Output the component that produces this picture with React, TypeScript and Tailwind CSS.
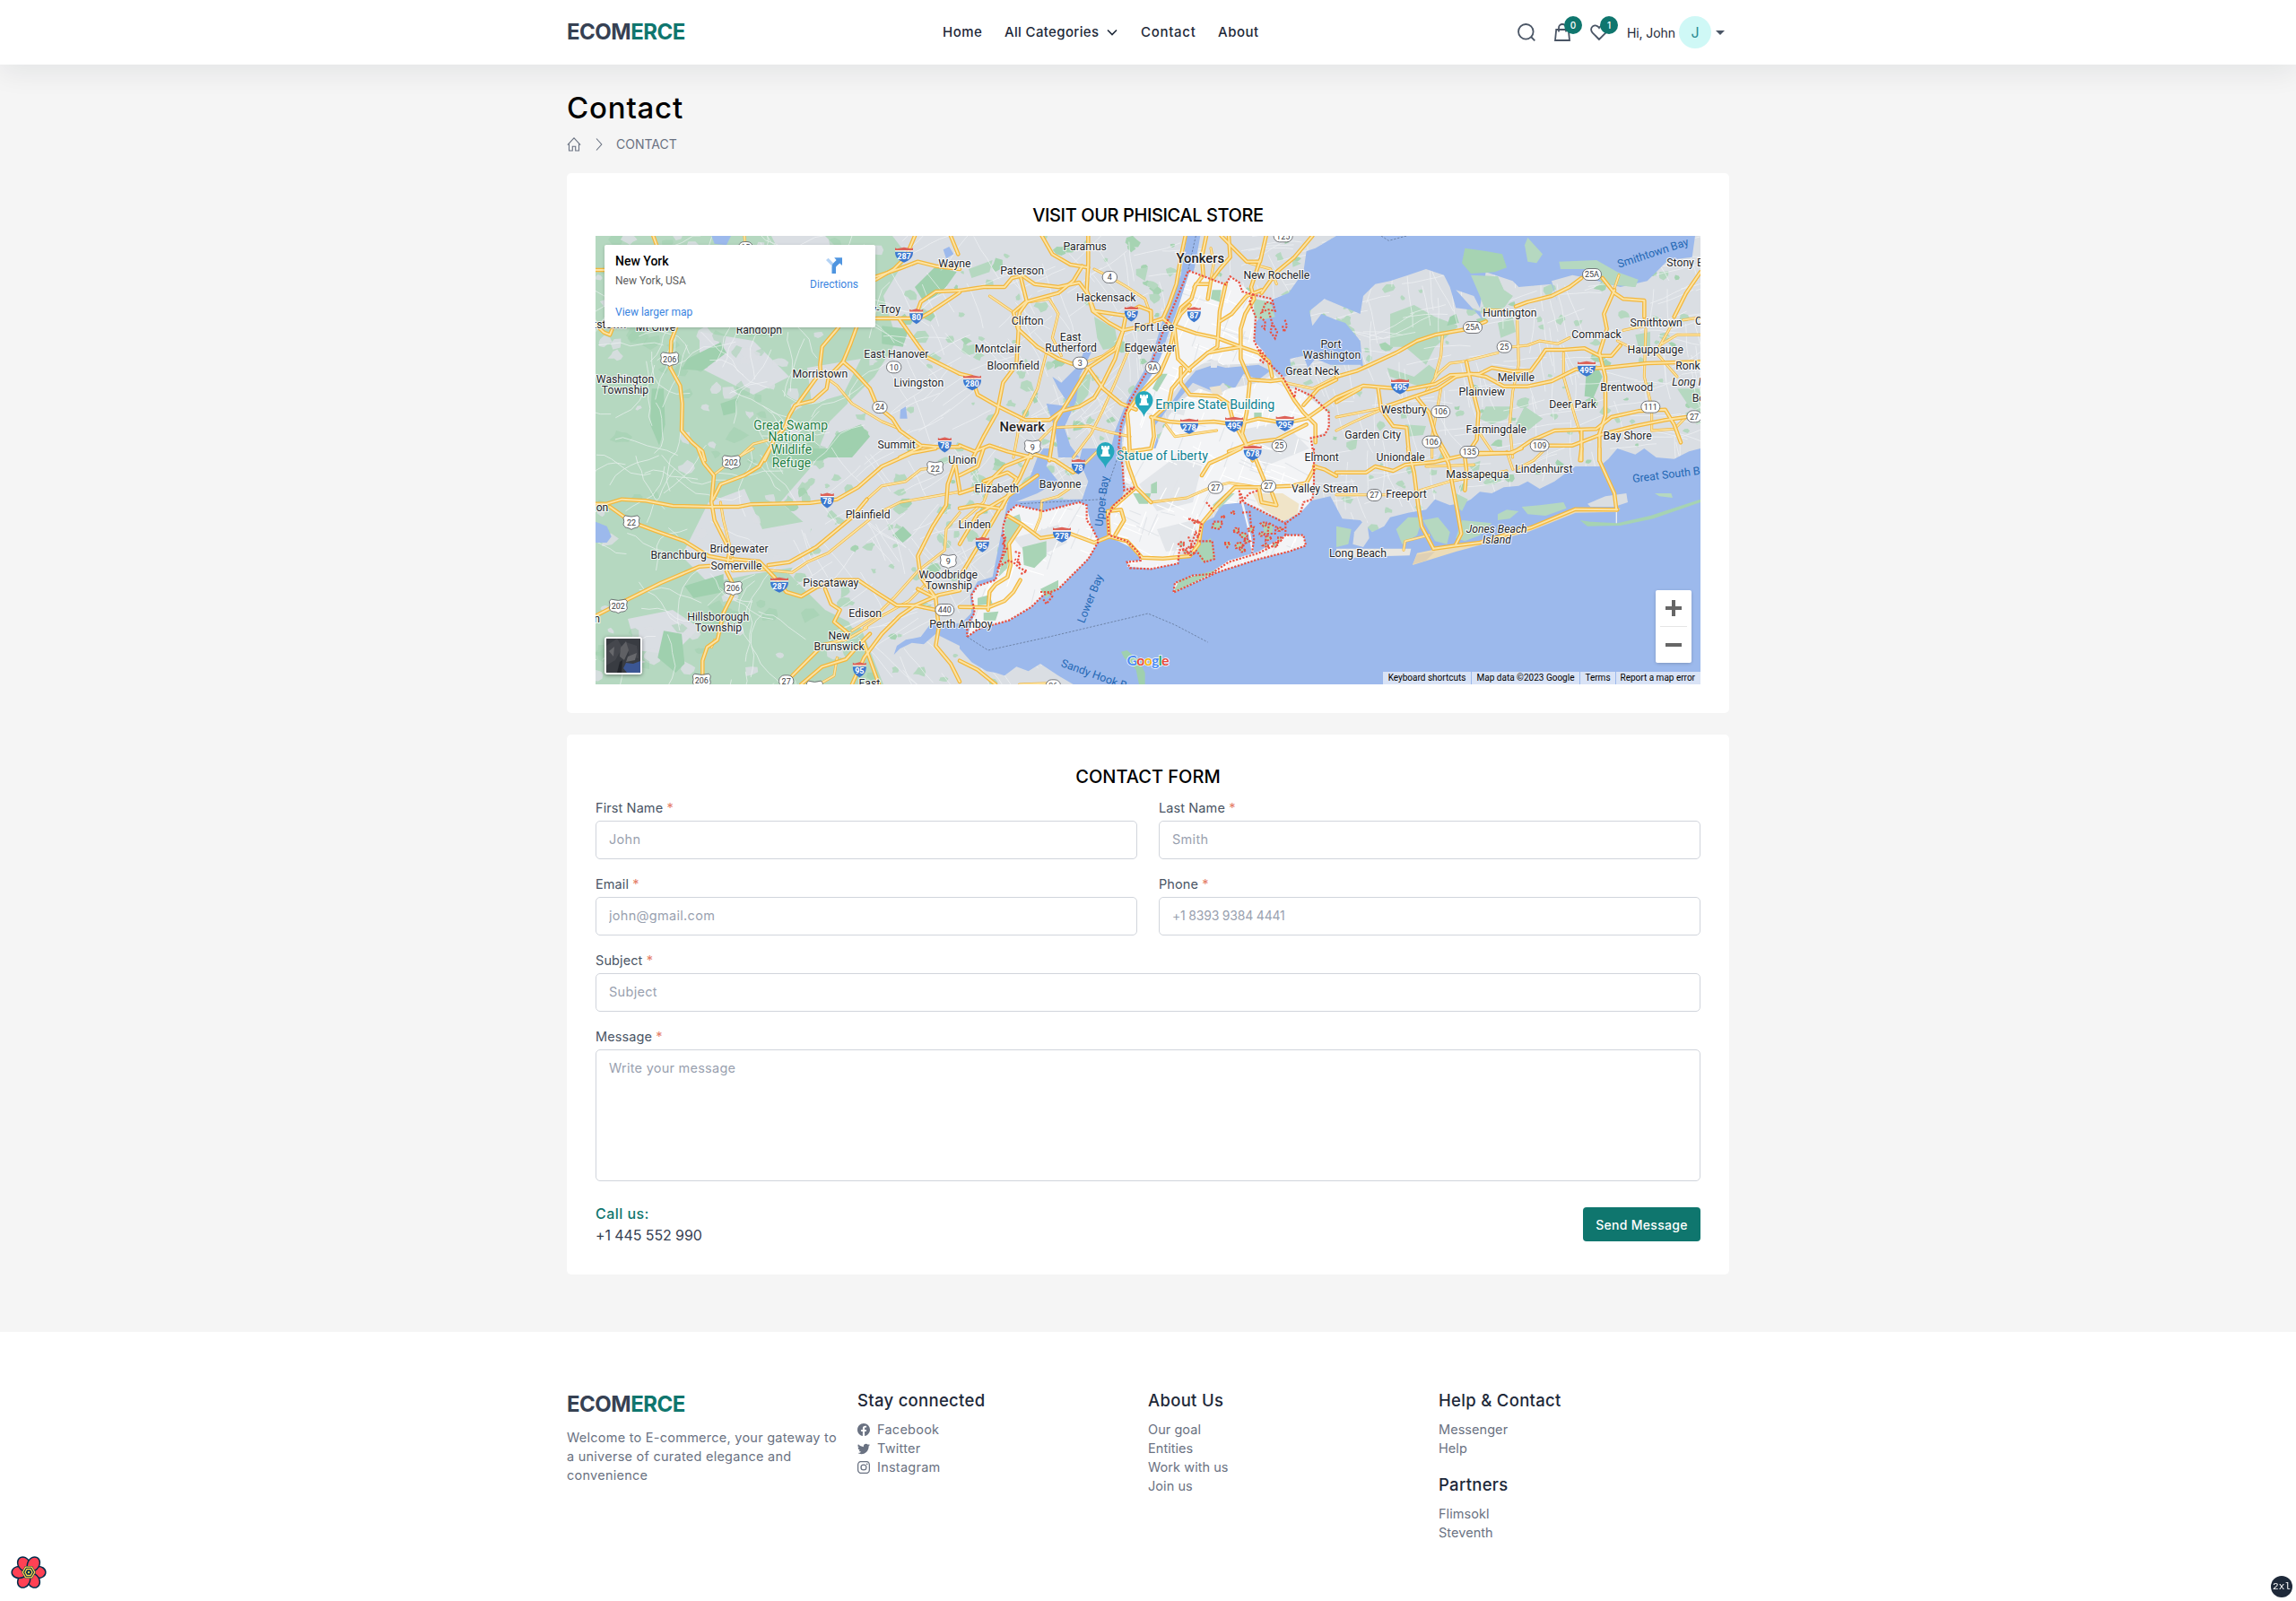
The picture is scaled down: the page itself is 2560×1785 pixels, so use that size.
import React from "react";
import { BsFacebook, BsTwitter, BsInstagram } from "react-icons/bs";

/* ---------- Map data: six 420px wide tiles, drawn at three units per pixel ---------- */

type Tile = "A" | "B" | "C" | "D" | "E" | "F";

const ORIGIN: Record<Tile, [number, number]> = {
  A: [650, 220],
  B: [1070, 220],
  C: [1490, 220],
  D: [650, 500],
  E: [1070, 500],
  F: [1490, 500],
};

const px = (t: Tile, x: number, y: number): [number, number] => [
  ORIGIN[t][0] + x / 3,
  ORIGIN[t][1] + y / 3,
];

const MAJOR: Record<Tile, string[]> = {
  A: [
    "42,243 75,243",
    "235,129 250,170",
    "42,425 70,452 90,460 98,440",
    "312,435 295,480 292,570 325,630 332,690 330,780 365,820 400,850 408,880",
    "915,435 895,490 870,550 822,600 815,640 770,680 710,695 690,730 675,770 640,810 608,880",
    "870,550 905,580 960,640 985,700 1035,740 1060,780 1130,830 1180,835 1260,835",
    "780,605 715,695",
    "980,275 1040,240 1080,200 1110,129",
    "980,265 1060,238 1120,215 1180,230 1260,240",
    "980,405 1110,405 1130,350 1180,315 1260,312",
    "1060,410 1110,480 1150,535 1220,570 1260,590",
    "1120,408 1160,385 1260,318",
    "1060,870 1130,835",
    "1230,129 1255,190",
    "855,435 800,500 793,560 795,600",
  ],
  B: [
    "0,312 80,300 150,300 175,270 210,262 250,290 330,300 400,285 430,325 450,380 550,395",
    "430,129 430,220 425,310 445,380 500,420 545,445 640,425",
    "275,129 310,190 370,225 430,235",
    "410,230 380,280 330,320 220,350 180,385 195,440 260,500 330,540 370,555 430,570 480,640 540,690 590,710",
    "205,270 225,350 200,385 195,480 190,560 145,620 125,720 80,800 40,880",
    "0,590 40,600 60,660 130,700 220,745 300,745 340,715 400,700 450,670 480,620 520,540 545,450 555,400",
    "300,880 320,750 370,670 430,570 520,510 545,450",
    "755,129 740,200 725,290 700,360 680,405 650,415",
    "770,360 740,390 718,430 790,455 860,470 940,500 1000,520 1035,550 1045,600",
    "825,129 810,200 815,260 785,300",
    "900,129 905,200 870,240 840,280 830,340",
    "875,129 960,215 1005,215 1025,129",
    "1005,210 975,300 985,340 955,390 940,440 940,540 970,610",
    "1010,310 960,330 910,390 870,415",
    "1180,129 1120,200 1060,250 1010,320",
    "890,290 870,380 862,500 830,520 760,580 710,640 700,690 645,740 650,800 640,840 570,850",
    "830,290 790,290 775,340 740,370 718,430 730,540 770,580",
    "740,570 740,620 770,660 860,665 900,690 915,750 960,830 980,880",
    "640,735 700,750 760,755 850,750 920,760 1000,740 1090,755 1160,740 1260,670",
    "970,610 1040,615 1080,610 1120,680 1150,720 1190,760 1190,820",
    "1260,610 1200,640 1150,695",
    "830,520 880,510 940,500",
    "680,405 720,440",
    "900,850 980,820 1060,810 1160,760",
    "970,620 960,720 945,790 965,840",
    "0,830 50,850 100,830 160,850 240,870",
    "550,395 600,365 640,380 640,420",
    "570,870 565,770 560,720 600,660 670,590 700,520 718,440",
  ],
  C: [
    "0,670 90,630 150,635 240,642 330,625 380,595 480,590 520,570 590,582 650,580 680,540 700,510 760,510 830,505 880,530 920,530 950,495",
    "0,685 80,640",
    "150,705 250,670 340,640 400,600 450,590 500,600 560,632 640,632 720,615 800,575 900,570 1040,555 1218,550",
    "140,640 150,710 190,765 235,770 245,880",
    "270,670 310,720 330,790 375,870",
    "435,550 450,620 475,720 470,810 430,870",
    "930,310 895,390 905,440 880,520 900,600 900,730 880,790 880,880",
    "480,855 590,855 650,815 730,780 870,775 920,735 1010,715 1100,710 1130,760 1152,820",
    "690,830 790,830 880,795 1000,765 1100,745 1170,735",
    "820,780 820,880",
    "820,270 780,300 720,330 640,350 600,365",
    "890,270 930,320 960,340 1030,345 1030,400",
    "1218,250 1170,320 1130,400",
    "0,600 70,580 200,520 270,480 330,460 440,440 500,415",
  ],
  D: [
    "42,185 80,185 130,170 210,175 300,192 430,195 520,195 560,187 760,182 850,170 920,130 1000,60 1100,15 1180,0",
    "90,195 160,245 240,275 340,310 420,360 500,375",
    "385,0 405,50 438,90 430,180 440,240 490,340 480,410 500,450",
    "625,0 590,60 540,90 460,120 435,170",
    "42,560 120,520 260,450 390,395 430,392",
    "500,370 590,378 640,430 680,480 730,495 780,465 850,440 920,440 980,480 1050,525 1110,525 1180,540 1230,535",
    "620,390 690,380 780,330 900,230 950,170",
    "500,490 470,550 450,640 415,665 400,710 400,760",
    "700,760 790,670",
    "730,789 800,730 880,705 920,660 960,620",
    "900,789 940,700 1000,620 1060,560 1110,525 1190,490 1260,475",
    "1120,470 1180,500 1190,600 1180,660 1230,720 1260,780",
    "1260,140 1245,50 1220,120 1215,190 1170,260 1120,360 1130,430 1180,500",
    "810,470 830,520 860,540 840,580 890,620",
    "940,650 990,789",
  ],
  E: [
    "0,530 95,532 150,510 180,480 203,440",
    "95,540 100,480 120,455 160,430 170,390 165,320 205,260",
    "160,225 210,255 270,300 370,285 450,315 500,295 560,310 610,365 680,368 770,360 800,320 810,250 860,190 920,130 1000,130 1110,125",
    "500,295 495,210 540,205 550,240 520,290",
    "510,200 590,130 565,60 550,0",
    "590,130 640,180",
    "0,430 60,330 130,210 200,100 245,0",
    "0,320 60,220 160,160 260,90",
    "0,150 90,120 150,60 250,20 320,40 380,80",
    "1000,130 1010,180 1060,190 1045,150",
    "975,0 1020,110",
    "810,90 835,50 880,30 940,0",
    "1185,60 1220,70 1260,92",
    "1110,125 1160,115 1190,60",
    "0,710 60,740 120,789",
    "0,90 60,60 80,0",
    "0,200 60,190 130,200",
    "80,110 160,80 190,100 140,200",
  ],
  F: [
    "0,80 100,80 130,60 190,75 230,55 330,45 440,20 580,15 620,0",
    "240,0 260,80 275,200 285,260 325,335",
    "350,0 375,50 390,130 405,210 418,285 400,320",
    "325,335 400,325 480,315 560,290 650,265 800,203 940,205",
    "937,205 930,150 880,40 880,0",
    "430,140 435,70 430,30",
    "820,0 815,40",
  ],
};

const MINOR: Record<Tile, string[]> = {
  A: [
    "825,612 850,630 900,690 950,720 1000,750 1060,775",
    "520,870 570,825 620,812",
    "540,129 543,160",
  ],
  B: [
    "450,240 500,265 560,300 620,340 645,410",
    "400,560 480,530 520,500",
    "230,350 300,340 330,390 310,470 340,530",
    "230,870 270,810 310,770 430,765 500,785 570,800",
    "380,870 440,790 480,710 520,620 570,500",
    "840,170 850,220 830,330",
    "970,220 1040,240 1060,290",
    "690,760 720,800 860,780",
    "100,330 180,385",
    "290,520 260,640 200,760 180,870",
    "1090,620 1180,640 1260,600",
  ],
  C: [
    "0,735 150,705",
    "0,780 60,750 150,710",
    "300,650 340,590 380,555 420,550 540,520",
    "590,870 580,760 590,650 610,560 605,410",
    "760,520 760,600 800,740 820,800",
    "590,500 640,495 680,480 740,490 780,470",
    "960,445 1030,430 1030,350",
    "1090,490 1140,460 1218,460",
    "1160,410 1218,402",
    "355,460 350,530 330,600",
    "945,260 925,320",
    "1035,440 1030,600 1055,700 1055,780 1130,775 1170,735",
    "1070,520 1140,600",
    "1080,500 1120,430",
    "480,790 520,850",
    "350,640 320,800 320,870",
    "500,375 580,380",
    "940,480 1000,510",
  ],
  D: [
    "460,180 470,240 500,360",
    "435,90 500,40 570,0",
    "500,410 600,405 700,415 750,380 820,350 900,285 980,220 1060,180 1260,145",
    "950,170 1000,125 1080,110 1130,70 1180,65",
    "900,610 980,560 1040,500 1120,410 1210,340 1215,270 1260,215",
    "440,640 430,665",
    "940,600 1000,560 1090,510 1150,450",
    "780,660 880,640 950,600",
    "850,700 840,760 790,789",
  ],
  E: [
    "640,180 760,165 840,130",
    "840,130 900,115 1000,130",
    "250,280 270,230 275,175 330,160 380,125",
    "390,80 470,0",
    "200,789 300,785",
    "0,250 80,180 110,100",
  ],
  F: [
    "280,140 380,110 570,75",
    "0,155 170,155",
    "225,340 230,310 310,290",
    "590,70 570,10",
    "600,70 660,40 700,0",
    "300,60 460,55",
  ],
};

// City boundary
const BOUNDARY: Record<Tile, string[]> = {
  A: [],
  B: [
    "530,850 540,760 570,680 640,560 680,450 730,330 765,245 890,292 905,265 935,285 945,315 980,325 970,350 990,400 985,480 1010,530 1080,600 1120,670 1125,640 1180,665 1235,720 1235,770 1220,795 1175,805 1185,870",
    "980,325 1045,340 1055,380 1030,375 1010,385 1025,350 1045,355",
    "1035,385 1045,420 1062,450 1055,472 1040,450 1045,425",
    "1005,400 1022,415 1020,440 1010,430",
    "1088,410 1095,430 1085,450 1080,430",
    "1005,510 1022,530 1015,552 1000,540",
  ],
  C: [],
  D: [],
  E: [
    "1185,0 1185,130 1180,170 1150,180 1140,215 1090,250 1090,290 1150,290 1158,325 1100,345 1000,370 860,415 715,482 720,450 780,425 840,420 900,380 1000,350 1060,320 1090,290",
    "535,0 545,60 550,140 585,130 515,190 495,230 500,290 560,310 600,350 605,375 560,380 570,400 640,403 730,385 735,340 780,330 800,290 810,250 770,235",
    "25,630 60,605 110,590 165,575 240,530 280,490 330,470 380,420 430,370 465,310 440,260 425,240 425,190 400,180 280,210 190,190 160,215 145,260 150,330 120,440 60,460 40,490 50,550 25,590 25,630",
    "140,290 155,300 145,320 158,335 140,370 130,395 165,375 185,385 200,400 225,410 205,420",
    "185,345 200,350 195,375 203,390 185,370",
    "270,480 300,480 310,495 290,520 280,505",
    "825,180 850,210",
    "800,310 845,310 852,370 820,380 790,340",
    "850,245 880,245 870,270 845,265 850,245",
    "765,235 800,250",
    "765,295 775,320 790,280 800,300",
    "945,215 970,212 975,260 985,300 978,350",
    "1035,250 1058,262 1055,285 1030,285 1035,250",
    "885,315 905,315 895,330 885,315",
    "935,140 940,180 970,150 1000,140",
    "940,150 950,180 1050,230 1090,250",
  ],
  F: [],
};

const FERRY: [Tile, string][] = [
  ["E", "25,630 95,675 300,630 630,552 720,590 830,648"],
  ["E", "525,40 480,170 200,185"],
  ["B", "790,129 765,240"],
  ["C", "150,129 175,145 235,129"],
];

const WATER: [Tile, string][] = [
  // Ocean and south shore bays
  [
    "E",
    "0,670 40,715 90,745 120,750 150,760 190,730 230,745 270,720 330,760 380,789 2478,789 2478,0 2440,10 2390,35 2330,30 2290,0 2260,20 2200,0 2170,35 2140,60 2060,60 2030,80 2010,95 1990,110 1940,135 1900,110 1870,125 1820,130 1780,150 1740,145 1710,170 1690,180 1640,190 1590,170 1560,205 1500,215 1440,230 1420,260 1380,280 1340,240 1280,235 1240,160 1150,180 1100,240 1020,220 950,175 880,180 850,230 810,250 800,310 770,360 610,370 560,310 500,295 495,210 540,170 555,130 540,60 560,0 410,0 400,40 430,110 410,170 300,170 160,180 150,230 130,330 110,430 60,445 35,490 40,550 0,590",
  ],
  // Hudson
  [
    "B",
    "760,129 740,260 680,410 640,540 560,680 520,780 500,870 570,870 540,860 545,780 575,690 660,570 700,450 745,330 785,240 805,129",
  ],
  // Long Island Sound
  [
    "B",
    "1160,180 1150,250 1100,320 1050,340 1020,380 990,420 985,500 1020,520 1040,570 1085,600 1110,590 1105,540 1150,530 1165,570 1190,540 1240,560 1340,560 1350,570 1340,480 1290,420 1260,410 1210,390 1180,430 1170,380 1220,340 1340,390 1350,330 1390,290 1440,280 1500,260 1560,240 1620,260 1640,300 1660,370 1740,380 1750,410 1660,310 1720,330 1740,370 1760,250 1850,280 1870,300 1980,290 2000,350 1980,280 2050,260 2100,270 2210,300 2300,280 2370,210 2450,200 2460,129 1260,129 1190,170",
  ],
  // East River
  [
    "B",
    "640,740 670,830 640,870 620,860 640,780 680,730 740,640 790,580 850,560 890,570 1000,560 1040,580 1000,610 950,590 920,640 880,620 850,650 780,620 720,690",
  ],
  // Newark bay and rivers
  ["B", "310,600 340,620 400,560 420,500 440,520 400,600 390,680 350,770 370,830 400,870 330,870 320,780 290,690 370,700 330,640"],
  ["E", "310,0 290,60 330,110 260,150 160,190 170,140 230,110 260,30 280,0"],
  ["D", "42,245 80,260 95,295 80,315 42,315"],
  ["D", "1260,585 1160,590 1130,630 1080,640 1050,660 1040,690 1060,670 1100,650 1140,655 1180,620 1260,660"],
  ["A", "430,129 440,155 480,160 495,129"],
  ["A", "1205,175 1225,165 1240,190 1215,205"],
  ["A", "1062,710 1080,700 1085,740 1060,740"],
];

const GREEN: [Tile, string, string][] = [
  ["A", "350,540 460,485 480,520 400,580 330,575", "d"],
  ["A", "1110,300 1180,230 1250,250 1200,320 1140,350", "d"],
  ["A", "1000,430 1090,440 1070,500 1000,490", "d"],
  ["A", "850,790 930,760 960,800 900,870 800,870", "d"],
  ["A", "230,640 270,640 275,760 255,830 225,760", "d"],
  ["A", "460,690 520,670 510,720 470,730", "d"],
  ["D", "270,610 330,620 340,720 310,750 250,700", "d"],
  ["D", "340,460 470,420 470,480 370,500", "d"],
  ["D", "640,50 800,40 860,10 900,0 640,0", "d"],
  ["D", "1035,290 1070,260 1100,290 1070,315", "d"],
  ["B", "590,240 630,235 620,280 590,260", "l"],
  ["B", "30,240 110,210 100,250 40,270", "l"],
  ["B", "395,600 440,590 430,660 380,720 360,700", "l"],
  ["B", "450,400 520,440 530,500 480,510 460,470", "l"],
  ["C", "430,170 500,180 555,190 570,235 530,250 450,255 420,220", "d"],
  ["C", "450,260 540,265 560,310 590,330 560,370 500,380 480,330", "l"],
  ["C", "630,160 640,135 690,190 670,220 640,215", "l"],
  ["C", "745,215 870,210 940,250 1010,275 1000,300 900,290 830,240 750,240", "l"],
  ["C", "180,390 260,360 330,400 410,430 330,500 300,560 230,500 180,500", "l"],
  ["C", "170,570 260,600 310,560 350,590 300,640 180,600", "l"],
  ["C", "500,700 590,700 570,740 520,760 480,740", "l"],
  ["C", "630,700 690,740 640,780 600,760", "l"],
  ["C", "835,600 870,560 890,600 860,670 830,665", "d"],
  ["C", "1140,640 1218,640 1218,720 1180,700", "l"],
  ["C", "540,420 590,400 600,450 550,470", "l"],
  ["C", "1000,460 1050,450 1050,500 1010,500", "l"],
  ["C", "230,760 300,765 290,795 240,800", "l"],
  ["C", "380,400 400,390 410,420 370,430", "d"],
  ["C", "0,400 60,440 80,520 30,510 0,470", "l"],
];

// Marsh and barrier islands laid over the bays
const ISLANDS: [Tile, string, string][] = [
  ["E", "540,680 560,675 600,710 620,750 620,789 600,789 590,740 550,700", "#9fd0ae"],
  ["F", "0,335 250,335 245,358 170,360 0,368", "#e8e6e0"],
  ["F", "255,390 270,350 340,335 480,312 640,265 800,208 950,200 940,212 800,215 640,280 400,345", "#ecdcb8"],
  ["F", "255,388 270,355 330,345 300,375", "#dfd0b4"],
  ["F", "815,240 850,245 940,250 1050,225 1218,170 1218,180 1060,235 950,258 840,260", "#a6d3b2"],
  ["F", "200,270 240,230 290,230 270,290 220,320", "#b5d8c0"],
  ["F", "290,240 340,230 380,280 370,320 330,310", "#b5d8c0"],
  ["F", "0,260 50,270 40,320 0,330", "#b5d8c0"],
  ["F", "400,150 440,170 420,210 400,190", "#b5d8c0"],
  ["F", "420,240 520,250 480,290 430,310 400,300", "#b5d8c0"],
  ["F", "540,220 570,205 610,210 580,235 540,240", "#b5d8c0"],
  ["F", "620,195 680,190 760,180 770,200 700,225 640,220", "#b5d8c0"],
  ["F", "840,185 900,160 970,150 975,180 930,195 850,195", "#dadee2"],
  ["F", "1065,150 1120,150 1125,165 1080,160", "#b5d8c0"],
  ["F", "60,280 100,230 110,300 90,330 55,320", "#dadee2"],
];

const NYC: [Tile, string][] = [
  ["B", "770,245 890,292 905,265 935,285 980,325 985,400 985,480 1020,520 1000,555 880,560 840,540 790,570 740,620 650,740 660,800 640,870 565,870 545,840 560,720 640,600 700,480 740,340"],
  ["B", "700,730 740,680 800,640 860,660 900,640 1000,620 1050,590 1100,640 1130,640 1235,720 1235,780 1180,805 1185,880 640,880 670,800"],
  ["E", "555,0 1185,0 1180,170 1140,215 1080,240 1000,200 950,180 860,190 810,250 790,330 740,345 730,385 640,403 560,395 565,375 605,375 590,340 500,295 495,230 515,190 585,130 550,110"],
  ["E", "25,630 60,605 110,590 165,575 240,530 280,490 330,470 380,420 430,370 465,310 440,260 425,190 400,180 280,210 190,190 160,215 145,260 150,330 120,440 60,460 40,490 50,550"],
  ["E", "715,482 720,450 780,425 840,415 900,375 1000,345 1090,290 1150,290 1158,325 1100,345 1000,370 860,415"],
];

const NYC_FILL: [Tile, string, string][] = [
  ["E", "150,240 200,220 210,260 170,320 160,400 130,430 150,330", "#b5d8c0"],
  ["E", "210,330 290,310 290,360 250,400 215,390", "#a9d4b6"],
  ["E", "270,470 330,440 330,465 290,500", "#a9d4b6"],
  ["E", "60,500 100,490 110,520 60,525", "#a9d4b6"],
  ["E", "80,550 130,545 120,575 80,575", "#a9d4b6"],
  ["E", "580,150 640,150 630,185 600,185", "#a9d4b6"],
  ["E", "640,120 660,110 660,150 640,150", "#a9d4b6"],
  ["E", "790,330 840,300 855,370 810,380", "#a9d4b6"],
  ["E", "980,150 1080,150 1135,185 1130,220 1080,245 1000,190", "#f0e4c8"],
  ["E", "715,480 735,440 860,405 850,415 740,470", "#a9d4b6"],
  ["E", "845,190 890,150 920,150 870,200", "#b5d8c0"],
  ["E", "1015,260 1050,255 1045,285 1020,285", "#a9d4b6"],
  ["E", "845,250 875,245 870,270 848,268", "#a9d4b6"],
  ["E", "885,312 908,314 900,332", "#a9d4b6"],
  ["B", "845,310 875,310 870,350 840,340", "#a9d4b6"],
  ["B", "985,340 1040,350 1055,400 1010,410 985,400", "#b5d8c0"],
  ["B", "670,590 695,590 660,650 645,640", "#a9d4b6"],
  ["B", "985,720 1010,720 1010,745 985,745", "#a9d4b6"],
  ["B", "700,700 760,690 750,730 710,720", "#e3e6ea"],
  ["B", "835,635 870,630 880,660 850,665", "#ece2cf"],
  ["B", "840,545 865,545 860,570 840,570", "#e3e6ea"],
];

type Label = [Tile, number, number, string, ("start" | "end")?];
const LABEL_COLOR = "#24262a";
const LABELS: Label[] = [
  ["A", 1243, 234, "Wayne"],
  ["A", 1062, 388, "Parsippany-Troy", "end"],
  ["A", 145, 438, "Hackettstown", "end"],
  ["A", 243, 447, "Mt Olive"],
  ["A", 589, 455, "Randolph"],
  ["A", 1048, 537, "East Hanover"],
  ["A", 793, 604, "Morristown"],
  ["A", 1123, 633, "Livingston"],
  ["A", 141, 621, "Washington"],
  ["A", 141, 658, "Township"],
  ["A", 1049, 840, "Summit"],
  ["D", 1269, 50, "Union"],
  ["D", 85, 210, "Lebanon", "end"],
  ["D", 57, 582, "Flemington", "end"],
  ["D", 320, 369, "Branchburg"],
  ["D", 522, 348, "Bridgewater"],
  ["D", 513, 405, "Somerville"],
  ["D", 953, 234, "Plainfield"],
  ["D", 829, 462, "Piscataway"],
  ["D", 944, 564, "Edison"],
  ["D", 452, 577, "Hillsborough"],
  ["D", 453, 612, "Township"],
  ["D", 857, 640, "New"],
  ["D", 857, 676, "Brunswick"],
  ["D", 1222, 436, "Woodbridge"],
  ["D", 1224, 472, "Township"],
  ["D", 1264, 600, "Perth Amboy"],
  ["D", 958, 798, "East"],
  ["B", 419, 178, "Paramus"],
  ["B", 209, 258, "Paterson"],
  ["B", 490, 348, "Hackensack"],
  ["B", 227, 426, "Clifton"],
  ["B", 371, 480, "East"],
  ["B", 372, 516, "Rutherford"],
  ["B", 127, 518, "Montclair"],
  ["B", 179, 576, "Bloomfield"],
  ["B", 650, 447, "Fort Lee"],
  ["B", 637, 516, "Edgewater"],
  ["B", 1060, 273, "New Rochelle"],
  ["B", 1242, 504, "Port"],
  ["B", 1245, 541, "Washington"],
  ["B", 1180, 594, "Great Neck"],
  ["E", 1211, 42, "Elmont"],
  ["E", 124, 147, "Elizabeth"],
  ["E", 336, 133, "Bayonne"],
  ["E", 50, 267, "Linden"],
  ["E", 1221, 147, "Valley Stream"],
  ["F", 72, 363, "Long Beach"],
  ["C", 1105, 230, "Stony Brook", "start"],
  ["C", 580, 399, "Huntington"],
  ["C", 1070, 432, "Smithtown"],
  ["C", 1200, 426, "Centereach", "start"],
  ["C", 870, 472, "Commack"],
  ["C", 1067, 523, "Hauppauge"],
  ["C", 1135, 577, "Ronkonkoma", "start"],
  ["C", 1190, 684, "Bohemia", "start"],
  ["C", 601, 616, "Melville"],
  ["C", 487, 663, "Plainview"],
  ["C", 971, 648, "Brentwood"],
  ["C", 791, 705, "Deer Park"],
  ["C", 226, 724, "Westbury"],
  ["C", 535, 789, "Farmingdale"],
  ["C", 122, 807, "Garden City"],
  ["C", 974, 810, "Bay Shore"],
  ["F", 215, 42, "Uniondale"],
  ["F", 472, 99, "Massapequa"],
  ["F", 694, 80, "Lindenhurst"],
  ["F", 234, 165, "Freeport"],
];

const GREEN_LABELS: Label[] = [
  ["A", 695, 776, "Great Swamp"],
  ["A", 697, 817, "National"],
  ["A", 697, 859, "Wildlife"],
  ["A", 697, 902, "Refuge"],
];

const ITALIC_LABELS: Label[] = [
  ["C", 1123, 629, "Long Island", "start"],
  ["F", 536, 282, "Jones Beach"],
  ["F", 537, 317, "Island"],
];

const WATER_LABELS: [Tile, number, number, string, number, "start" | "middle"][] = [
  ["C", 1063, 198, "Smithtown Bay", -18, "middle"],
  ["F", 992, 114, "Great South Bay", -7, "start"],
  ["E", 488, 178, "Upper Bay", -83, "middle"],
  ["E", 448, 507, "Lower Bay", -68, "middle"],
  ["E", 337, 728, "Sandy Hook Bay", 20, "start"],
];

const INTERSTATE: [Tile, number, number, string][] = [
  ["A", 1074, 193, "287"], ["A", 1115, 398, "80"], ["A", 1210, 828, "78"],
  ["B", 574, 390, "95"], ["B", 784, 392, "87"], ["B", 42, 620, "280"],
  ["B", 768, 766, "278"], ["B", 918, 760, "495"], ["B", 1088, 757, "295"],
  ["B", 980, 855, "678"], ["C", 213, 633, "495"], ["C", 837, 574, "495"],
  ["D", 817, 174, "78"], ["D", 657, 457, "287"], ["D", 925, 740, "95"],
  ["E", 397, 61, "78"], ["E", 342, 289, "278"], ["E", 76, 322, "95"],
];

const OVALS: [Tile, number, number, string][] = [
  ["A", 544, 168, "15"], ["A", 1040, 568, "10"], ["A", 993, 702, "24"],
  ["B", 502, 267, "4"], ["B", 403, 554, "3"], ["B", 646, 570, "9A"],
  ["B", 1069, 831, "25"], ["B", 1082, 130, "125"], ["C", 855, 258, "25A"],
  ["C", 456, 435, "25A"], ["C", 562, 500, "25"], ["C", 349, 717, "106"],
  ["C", 319, 818, "106"], ["C", 680, 830, "109"], ["C", 445, 852, "135"],
  ["C", 1051, 701, "111"], ["C", 1197, 733, "27"], ["D", 1210, 540, "440"],
  ["D", 680, 778, "27"], ["E", 856, 131, "27"], ["E", 1033, 126, "27"],
  ["E", 313, 793, "36"], ["F", 127, 156, "27"],
];

const US_ROUTES: [Tile, number, number, string][] = [
  ["A", 290, 541, "206"], ["B", 244, 835, "9"], ["D", 496, 46, "202"],
  ["D", 1178, 66, "22"], ["D", 162, 247, "22"], ["D", 1222, 377, "9"],
  ["D", 502, 467, "206"], ["D", 118, 527, "202"], ["D", 397, 776, "206"],
  ["D", 775, 800, "1"],
];

/* Small seeded generator, so the local streets and parks come out the same each time */
function makeRandom(seed: number) {
  let s = seed;
  return () => {
    s = (s * 1664525 + 1013904223) % 4294967296;
    return s / 4294967296;
  };
}

function blob(cx: number, cy: number, r: number, rnd: () => number) {
  const n = 6 + Math.floor(rnd() * 4);
  const pts: string[] = [];
  for (let i = 0; i < n; i++) {
    const a = (i / n) * Math.PI * 2;
    const d = r * (0.45 + rnd() * 0.75);
    pts.push(`${(cx + Math.cos(a) * d).toFixed(1)},${(cy + Math.sin(a) * d * 0.8).toFixed(1)}`);
  }
  return pts.join(" ");
}

function westEdge(y: number) {
  if (y < 420) return 995 - (y - 263) * 0.05;
  if (y < 560) return 980 - (y - 420) * 0.75;
  if (y < 640) return 875;
  return 875 + (y - 640) * 0.8;
}

const rnd = makeRandom(77);

const PATCHES = Array.from({ length: 620 }, () => {
  const x = 664 + rnd() * 1232;
  const y = 263 + rnd() * 500;
  const west = x < westEdge(y);
  const roll = rnd();
  if (west) {
    const grey = roll < 0.3 + ((x - 664) / 330) * 0.45;
    return {
      p: blob(x, y, (grey ? 3 : 5) + rnd() * 9, rnd),
      c: grey ? "#dadee3" : "#9fd0ae",
      o: grey ? 0.85 : 0.5,
    };
  }
  return {
    p: blob(x, y, 2.5 + rnd() * (x < 1150 ? 7 : 6), rnd),
    c: roll < 0.75 ? "#b5d8c0" : "#a6d3b2",
    o: 1,
  };
});

const STREETS = Array.from({ length: 900 }, (_, k) => {
  let x = 664 + rnd() * 1232;
  let y = 263 + rnd() * 500;
  const west = x < westEdge(y);
  let a = west
    ? rnd() * Math.PI * 2
    : (rnd() < 0.5 ? 0 : Math.PI / 2) + (x < 1250 ? -0.6 : -0.15) + (rnd() - 0.5) * 0.4;
  const pts = [`${x.toFixed(1)},${y.toFixed(1)}`];
  const n = west ? 6 : 4;
  for (let i = 0; i < n; i++) {
    a += (rnd() - 0.5) * (west ? 1.1 : 0.3);
    const l = west ? 8 + rnd() * 8 : 8 + rnd() * 9;
    x += Math.cos(a) * l;
    y += Math.sin(a) * l;
    pts.push(`${x.toFixed(1)},${y.toFixed(1)}`);
  }
  return { p: pts.join(" "), hidden: west && k % 5 < 2 };
}).filter((s) => !s.hidden);

const CITY_STREETS = Array.from({ length: 420 }, () => {
  const x = 1075 + rnd() * 400;
  const y = 300 + rnd() * 370;
  const a = (rnd() < 0.5 ? 0.35 : 1.95) + (rnd() - 0.5) * 0.3;
  const l = 12 + rnd() * 26;
  return `${x.toFixed(1)},${y.toFixed(1)} ${(x + Math.cos(a) * l).toFixed(1)},${(y + Math.sin(a) * l).toFixed(1)}`;
});

// Marsh islets of Jamaica Bay: centre x, centre y, radius
const ISLETS: [number, number, number][] = [
  [925, 275, 13], [950, 290, 12], [935, 325, 13], [960, 310, 11], [975, 270, 11],
  [1018, 255, 11], [1030, 300, 12], [1055, 320, 12], [1072, 270, 11], [1010, 285, 9],
  [1070, 305, 9], [915, 215, 7], [880, 228, 7], [745, 320, 11], [755, 345, 12],
  [775, 350, 10], [770, 330, 9], [945, 340, 10], [1025, 325, 9], [790, 245, 7],
];
const ISLET_SHAPES = ISLETS.map(([x, y, r]) => blob(x, y, r, rnd));

const tileTransform = (t: Tile) => `translate(${ORIGIN[t][0]} ${ORIGIN[t][1]}) scale(0.33333)`;
const TILES = Object.keys(ORIGIN) as Tile[];

function Roads({ data, outer, inner }: { data: Record<Tile, string[]>; outer: number; inner: number }) {
  return (
    <g fill="none" strokeLinejoin="round" strokeLinecap="round">
      {TILES.map((t) => (
        <g key={t} transform={tileTransform(t)} stroke="#f3b73c" strokeWidth={outer}>
          {data[t].map((p, i) => (
            <polyline key={i} points={p} />
          ))}
        </g>
      ))}
      {TILES.map((t) => (
        <g key={t + "i"} transform={tileTransform(t)} stroke="#fbe3a4" strokeWidth={inner}>
          {data[t].map((p, i) => (
            <polyline key={i} points={p} />
          ))}
        </g>
      ))}
    </g>
  );
}

function MapText({
  items,
  size,
  fill = LABEL_COLOR,
  italic,
}: {
  items: Label[];
  size: number;
  fill?: string;
  italic?: boolean;
}) {
  return (
    <g
      fontSize={size}
      fontStyle={italic ? "italic" : "normal"}
      fill={fill}
      stroke="#ffffff"
      strokeWidth={2.2}
      strokeOpacity={0.85}
      strokeLinejoin="round"
      paintOrder="stroke"
    >
      {items.map(([t, x, y, s, anchor], i) => {
        const [X, Y] = px(t, x, y);
        return (
          <text key={i} x={X} y={Y} textAnchor={anchor ?? "middle"}>
            {s}
          </text>
        );
      })}
    </g>
  );
}

function Pin({ x, y }: { x: number; y: number }) {
  return (
    <g transform={`translate(${x} ${y})`}>
      <path d="M0 19C-1 12-10 9-10 0A10 10 0 0 1 10 0C10 9 1 12 0 19Z" fill="#25a8bd" />
      <path
        d="M-4.5 -6h2.3v1.6h1.2V-6h2v1.6h1.2V-6h2.3v3.4L3 -1.5l.7 5h1.3V6H-5V3.5h1.3L-3 -1.5 -4.5 -2.6Z"
        fill="#fff"
      />
    </g>
  );
}

function StoreMap() {
  return (
    <svg
      viewBox="664 263 1232 500"
      className="block h-[500px] w-full"
      fontFamily="Roboto, sans-serif"
    >
      <defs>
        <clipPath id="city">
          {NYC.map(([t, p], i) => (
            <polygon key={i} points={p} transform={tileTransform(t)} />
          ))}
        </clipPath>
      </defs>
      <rect x="664" y="263" width="1232" height="500" fill="#dadee3" />
      <path
        d="M664 263H995L1012 285 985 330 1000 380 975 420 925 470 905 520 870 560 905 590 880 640 920 680 960 700 985 763H664Z"
        fill="#b5d8c0"
      />
      <path
        d="M790 560 830 545 850 590 905 580 900 630 840 640 790 650 760 620ZM860 263h60l20 20h-70ZM900 410 960 400 940 440 905 450ZM700 690l50-10 30 20-30 30-40-5ZM920 640 970 640 1000 700 950 700ZM780 370l60 10 40 40-40 20-60-30Z"
        fill="#dadee3"
      />
      {PATCHES.map((b, i) => (
        <polygon key={i} points={b.p} fill={b.c} opacity={b.o} />
      ))}
      {GREEN.map(([t, p, tone], i) => (
        <polygon
          key={i}
          points={p}
          transform={tileTransform(t)}
          fill={tone === "d" ? "#9fd0ae" : "#b5d8c0"}
        />
      ))}
      <g fill="none" stroke="#f4f6f8" strokeWidth="0.9" strokeLinejoin="round" opacity="0.7">
        {STREETS.map((s, i) => (
          <polyline key={i} points={s.p} />
        ))}
      </g>
      <g fill="#9cb9ec">
        {WATER.map(([t, p], i) => (
          <polygon key={i} points={p} transform={tileTransform(t)} />
        ))}
      </g>
      {GREEN.filter(([t, p]) => t === "C" && /^(430|450|630|745)/.test(p)).map(([t, p, tone], i) => (
        <polygon
          key={i}
          points={p}
          transform={tileTransform(t)}
          fill={tone === "d" ? "#a6d3b2" : "#b5d8c0"}
        />
      ))}
      {ISLANDS.map(([t, p, c], i) => (
        <polygon key={i} points={p} transform={tileTransform(t)} fill={c} />
      ))}
      <polyline
        points="937,205 937,250"
        transform={tileTransform("F")}
        stroke="#eef0f2"
        strokeWidth="4"
      />

      <g fill="#f3f4f6">
        {NYC.map(([t, p], i) => (
          <polygon key={i} points={p} transform={tileTransform(t)} />
        ))}
      </g>
      <g clipPath="url(#city)">
        <path
          d="M1270 540l40-30 30 10-10 40-40 10ZM1380 480l50-10 30 30-50 20ZM1290 590l40-10 10 30-40 5ZM1130 600l50-15 10 20-40 20Z"
          fill="#e3e6ea"
        />
        {CITY_STREETS.map((p, i) => (
          <polyline
            key={i}
            points={p}
            fill="none"
            stroke={i % 3 === 0 ? "#e2e5e9" : "#ffffff"}
            strokeWidth="1.1"
          />
        ))}
      </g>
      {NYC_FILL.map(([t, p, c], i) => (
        <polygon key={i} points={p} transform={tileTransform(t)} fill={c} />
      ))}
      <polyline
        points="945,180 965,260 980,345"
        transform={tileTransform("E")}
        stroke="#f3f4f6"
        strokeWidth="7"
        fill="none"
      />

      <Roads data={MINOR} outer={9} inner={5} />
      <Roads data={MAJOR} outer={13.5} inner={6} />

      {TILES.map((t) => (
        <g
          key={t}
          transform={tileTransform(t)}
          fill="none"
          stroke="#ea4f3f"
          strokeWidth="6.5"
          strokeDasharray="6.5 5"
        >
          {BOUNDARY[t].map((p, i) => (
            <polyline key={i} points={p} />
          ))}
        </g>
      ))}
      <g
        transform={tileTransform("E")}
        fill="#a9d4b6"
        stroke="#ea4f3f"
        strokeWidth="6"
        strokeDasharray="7 4"
      >
        {ISLET_SHAPES.map((p, i) => (
          <polygon key={i} points={p} />
        ))}
      </g>
      {FERRY.map(([t, p], i) => (
        <polyline
          key={i}
          points={p}
          transform={tileTransform(t)}
          fill="none"
          stroke="#6d84a8"
          strokeWidth="3"
          strokeDasharray="7 5"
        />
      ))}

      {/* Road shields */}
      {INTERSTATE.map(([t, x, y, s], i) => {
        const [X, Y] = px(t, x, y);
        const w = s.length === 3 ? 10 : 7.5;
        return (
          <g key={i} transform={`translate(${X} ${Y})`}>
            <path
              d={`M${-w} -3.5H${w}C${w} 3 ${w * 0.6} 6 0 8.5C${-w * 0.6} 6 ${-w} 3 ${-w} -3.5Z`}
              fill="#3b78cf"
            />
            <path d={`M${-w} -8L${-w + 2} -7L0 -8.5L${w - 2} -7L${w} -8V-5H${-w}Z`} fill="#dd6258" />
            <rect x={-w} y="-5" width={w * 2} height="1" fill="#fff" />
            <text y="4.3" fontSize="9" fontWeight="700" fill="#fff" textAnchor="middle">
              {s}
            </text>
          </g>
        );
      })}
      {OVALS.map(([t, x, y, s], i) => {
        const [X, Y] = px(t, x, y);
        const w = s.length === 3 ? 10.5 : 8.2;
        return (
          <g key={i} transform={`translate(${X} ${Y})`}>
            <rect x={-w} y="-6.5" width={w * 2} height="13" rx="6.5" fill="#fff" stroke="#55585d" strokeWidth="0.8" />
            <text y="3.3" fontSize="9" fill="#3c4043" textAnchor="middle">
              {s}
            </text>
          </g>
        );
      })}
      {US_ROUTES.map(([t, x, y, s], i) => {
        const [X, Y] = px(t, x, y);
        const w = s.length === 3 ? 10 : 9;
        return (
          <g key={i} transform={`translate(${X} ${Y})`}>
            <path
              d={`M${-w + 2} -7.5Q0 -5 ${w - 2} -7.5L${w} -5Q${w - 1.5} -1 ${w} 2.5Q${w - 1} 6.5 3 6.5L0 8L-3 6.5Q${-w + 1} 6.5 ${-w} 2.5Q${-w + 1.5} -1 ${-w} -5Z`}
              fill="#fff"
              stroke="#55585d"
              strokeWidth="0.8"
            />
            <text y="3.5" fontSize="9" fill="#3c4043" textAnchor="middle">
              {s}
            </text>
          </g>
        );
      })}

      <MapText items={LABELS} size={12.2} />
      <MapText items={GREEN_LABELS} size={13.8} fill="#1f8044" />
      <MapText items={ITALIC_LABELS} size={12.2} italic />
      <g fontSize="12.4" fill="#2468b4">
        {WATER_LABELS.map(([t, x, y, s, r, anchor], i) => {
          const [X, Y] = px(t, x, y);
          return (
            <text key={i} transform={`translate(${X} ${Y}) rotate(${r})`} textAnchor={anchor}>
              {s}
            </text>
          );
        })}
      </g>
      <g
        fontSize="14.8"
        fontWeight="500"
        fill="#1f2124"
        stroke="#fff"
        strokeWidth="2.4"
        strokeOpacity="0.85"
        paintOrder="stroke"
        textAnchor="middle"
      >
        <text x="1338.3" y="292.7">Yonkers</text>
        <text x="1139.7" y="480.7">Newark</text>
      </g>
      <g
        fontSize="14.2"
        fill="#0f8292"
        stroke="#fff"
        strokeWidth="2.2"
        strokeOpacity="0.85"
        paintOrder="stroke"
      >
        <text x="1288.3" y="456" textLength="133">Empire State Building</text>
        <text x="1245" y="513" textLength="102">Statue of Liberty</text>
      </g>
      <Pin x={1275.5} y={446} />
      <Pin x={1232.5} y={503} />
      <text
        x="1256.5"
        y="741.5"
        fontSize="16"
        fontWeight="700"
        textLength="47"
        stroke="#fff"
        strokeWidth="1.4"
        paintOrder="stroke"
        fontFamily="Lato, sans-serif"
      >
        <tspan fill="#4a8af4">G</tspan>
        <tspan fill="#e8483a">o</tspan>
        <tspan fill="#f5b50f">o</tspan>
        <tspan fill="#4a8af4">g</tspan>
        <tspan fill="#3aa757">l</tspan>
        <tspan fill="#e8483a">e</tspan>
      </text>
    </svg>
  );
}

function MapSection() {
  return (
    <div className="relative h-[500px] overflow-hidden font-[Roboto,sans-serif]">
      <StoreMap />
      <div className="absolute left-[10px] top-[10px] flex h-[92px] w-[302px] justify-between rounded-[2px] bg-white pl-3 pr-[19px] shadow-[0_1px_4px_-1px_rgba(0,0,0,0.3)]">
        <div className="flex flex-col whitespace-nowrap">
          <p className="mt-[10px] text-[14px] font-medium leading-4 text-black">New York</p>
          <p className="mt-[6px] text-[12px] leading-4 text-[#5b5b5b]">New York, USA</p>
          <a className="mt-[19px] text-[12px] leading-4 text-[#3a84df]">View larger map</a>
        </div>
        <div className="flex flex-col items-center pt-[14px] text-[12px] leading-4 text-[#3a84df]">
          <svg viewBox="0 0 18 18" className="h-[18px] w-[18px]">
            <path d="M0 3 2.6.8 8.5 6.800 6.500 9.500Z" fill="#b4d3f5" />
            <path d="M6.500 18V10.500Q6.500 8 8.300 6.300L11.600 3 9.200.3H18V9L15.300 6.500 11.700 9.800Q11 10.500 11 11.500V18Z" fill="#4f95e0" />
          </svg>
          <span className="mt-1">Directions</span>
        </div>
      </div>
      {/* Satellite toggle */}
      <div className="absolute bottom-[11px] left-[10px] h-[42px] w-[42px] overflow-hidden rounded-[3px] border-2 border-white bg-[#3d4045] shadow-[0_1px_4px_rgba(0,0,0,0.4)]">
        <svg viewBox="0 0 38 38" className="h-full w-full">
          <rect width="38" height="38" fill="#393c42" />
          <path d="M0 8 12 0 18 10 10 24 0 30ZM22 4 34 8 36 22 26 20Z" fill="#45474d" />
          <path d="M16 10 22 3 25 13 20 24 15 20Z" fill="#5f6064" />
          <path d="M3 14 9 9 8 20ZM24 20 34 16 32 24 22 26Z" fill="#67686c" />
          <path d="M38 25 30 28 22 27 19 33 23 38H38Z" fill="#3b5694" />
          <path d="M12 38 15 26 18 24 17 38Z" fill="#22252b" />
        </svg>
      </div>
      {/* Zoom buttons */}
      <div className="absolute bottom-6 right-[10px] flex h-[81px] w-10 flex-col items-center rounded-[2px] bg-white shadow-[0_1px_4px_-1px_rgba(0,0,0,0.3)]">
        <div className="flex h-10 items-center justify-center">
          <svg viewBox="0 0 18 18" className="h-[18px] w-[18px] fill-[#666]">
            <path d="M7 0h4v7h7v4h-7v7H7v-7H0V7h7Z" />
          </svg>
        </div>
        <div className="h-px w-[30px] bg-[#e6e6e6]" />
        <div className="flex h-10 items-center justify-center">
          <svg viewBox="0 0 18 18" className="h-[18px] w-[18px] fill-[#666]">
            <path d="M0 7h18v4H0Z" />
          </svg>
        </div>
      </div>
      <div className="absolute bottom-0 right-0 flex h-[14px] gap-px whitespace-nowrap text-[10px] leading-[14px] text-black">
        <span className="w-[98px] bg-[#d9e3f6] text-center">Keyboard shortcuts</span>
        <span className="w-[120px] bg-[#d9e3f6] text-center">Map data ©2023 Google</span>
        <span className="w-[39px] bg-[#d9e3f6] text-center">Terms</span>
        <span className="w-[94px] bg-[#d9e3f6] pr-[6px] text-right">Report a map error</span>
      </div>
    </div>
  );
}

/* ---------- Page ---------- */

function Logo() {
  return (
    <span className="whitespace-nowrap text-[24px] font-bold leading-9 tracking-[-0.5px] text-gray-700">
      ECOM<span className="text-[#0f766e]">ERCE</span>
    </span>
  );
}

function Badge({ children }: { children: string }) {
  return (
    <span className="absolute left-[11px] top-[-8px] flex h-5 w-5 items-center justify-center rounded-full bg-[#0f766e] text-[10px] font-medium text-white">
      {children}
    </span>
  );
}

function Header() {
  return (
    <header className="relative flex h-[72px] justify-center bg-white shadow-[0_10px_30px_rgba(17,24,39,0.07)]">
      <div className="relative flex w-[1296px] items-center justify-between">
        <Logo />
        <nav className="absolute left-[419px] top-0 flex h-full items-center whitespace-nowrap text-[15px] font-medium text-gray-800">
          <span className="w-[69px] tracking-[0.5px]">Home</span>
          <span className="w-[152px] tracking-[0.35px]">
            <span className="flex items-center">
              All Categories
              <svg viewBox="0 0 12 8" className="ml-[9px] h-2 w-3" fill="none" stroke="currentColor" strokeWidth="1.6">
                <path d="M1 1.500 6 6.500 11 1.500" />
              </svg>
            </span>
          </span>
          <span className="w-[86px] tracking-[0.7px]">Contact</span>
          <span className="tracking-[0.5px]">About</span>
        </nav>
        <div className="flex items-center text-gray-600">
          <svg viewBox="0 0 20 20" className="h-5 w-5" fill="none" stroke="currentColor" strokeWidth="1.8">
            <circle cx="9.3" cy="9.3" r="8.3" />
            <path d="M15 15 19.300 19.300" />
          </svg>
          <div className="relative ml-[21px] h-5 w-[18px]">
            <svg viewBox="0 0 18 20" className="h-5 w-[18px]" fill="none" stroke="currentColor" strokeWidth="1.8">
              <path d="M2.200 7H15.800L17 19H1Z" />
              <path d="M5 9.500V5a4 4 0 0 1 8 0V9.500" />
            </svg>
            <Badge>0</Badge>
          </div>
          <div className="relative ml-[22px] h-5 w-5">
            <svg viewBox="0 0 20 20" className="h-5 w-5" fill="none" stroke="currentColor" strokeWidth="1.8">
              <path d="M10 18 2.500 10.300C.4 8 .8 4.600 3 3.200 5.300 1.700 8.300 2.300 10 5c1.700-2.700 4.700-3.300 7-1.800 2.200 1.400 2.600 4.800.5 7.100Z" />
            </svg>
            <Badge>1</Badge>
          </div>
          <span className="ml-[21px] w-[58px] whitespace-nowrap text-[14px] tracking-[-0.1px] text-gray-800">Hi, John</span>
          <span className="flex h-9 w-9 items-center justify-center rounded-full bg-[#cff8f6] text-[16px] text-[#2b8c93]">J</span>
          <svg viewBox="0 0 10 5" className="ml-[5px] mr-[5px] h-[5px] w-[10px] fill-gray-600">
            <path d="M0 0H10L5 5Z" />
          </svg>
        </div>
      </div>
    </header>
  );
}

function FieldLabel({ children }: { children: string }) {
  return (
    <span className="h-[26px] text-[14.5px] leading-6 tracking-[0.1px] text-gray-600">
      {children} <span className="text-[#e5806a]">*</span>
    </span>
  );
}

function Field({
  label,
  placeholder,
  numeric,
}: {
  label: string;
  placeholder: string;
  numeric?: boolean;
}) {
  return (
    <label className="flex flex-col">
      <FieldLabel>{label}</FieldLabel>
      <input
        placeholder={placeholder}
        className={
          "h-[43px] rounded-[5px] border border-gray-300 bg-white px-[14px] pb-[2px] placeholder:text-gray-400 " +
          (numeric ? "text-[14px] tracking-[-0.2px]" : "text-[14.5px] tracking-[0.3px]")
        }
      />
    </label>
  );
}

function Links({ items, className }: { items: string[]; className: string }) {
  return (
    <ul className={"text-[14.5px] leading-[21px] tracking-[0.05px] text-gray-500 " + className}>
      {items.map((s) => (
        <li key={s}>{s}</li>
      ))}
    </ul>
  );
}

function FooterTitle({ children }: { children: string }) {
  return (
    <h3 className="text-[18.5px] font-medium leading-[27px] tracking-[0.3px] text-gray-800">{children}</h3>
  );
}

function Footer() {
  return (
    <footer className="flex h-[300px] justify-center bg-white pt-[63px]">
      <div className="grid w-[1296px] grid-cols-4">
        <div className="flex flex-col">
          <Logo />
          <p className="mt-2 whitespace-nowrap text-[14.5px] leading-[21px] tracking-[0.25px] text-gray-500">
            Welcome to E-commerce, your gateway to
            <br />a universe of curated elegance and
            <br />
            convenience
          </p>
        </div>
        <div>
          <FooterTitle>Stay connected</FooterTitle>
          <ul className="mt-2 text-[14.5px] leading-[21px] tracking-[0.25px] text-gray-500">
            <li className="flex items-center gap-2"><BsFacebook className="h-[14px] w-[14px]" />Facebook</li>
            <li className="flex items-center gap-2"><BsTwitter className="h-[14px] w-[14px]" />Twitter</li>
            <li className="flex items-center gap-2"><BsInstagram className="h-[14px] w-[14px]" />Instagram</li>
          </ul>
        </div>
        <div>
          <FooterTitle>About Us</FooterTitle>
          <Links className="mt-2" items={["Our goal", "Entities", "Work with us", "Join us"]} />
        </div>
        <div>
          <FooterTitle>Help &amp; Contact</FooterTitle>
          <Links className="mt-2 mb-[17px]" items={["Messenger", "Help"]} />
          <FooterTitle>Partners</FooterTitle>
          <Links className="mt-2" items={["Flimsokl", "Steventh"]} />
        </div>
      </div>
    </footer>
  );
}

function DevtoolsFlower() {
  return (
    <svg viewBox="-20 -18 40 36" className="fixed bottom-[14px] left-3 h-9 w-10">
      <g fill="#ff4154" stroke="#002c4b" strokeWidth="1.5">
        {[0, 60, 120, 180, 240, 300].map((a) => (
          <path key={a} transform={`rotate(${a})`} d="M5 5C9 7 13 7 16 5C19.800 2.500 19.800-2.500 16-5C13-7 9-7 5-5Z" />
        ))}
      </g>
      <path d="M-8 0-4-6.900H4L8 0 4 6.900H-4Z" fill="#002c4b" />
      <g fill="none" stroke="#ffd94c">
        <path d="M-6.800 0-3.400-5.900H3.400L6.800 0 3.400 5.900H-3.400Z" strokeWidth="1.3" />
        <path d="M-4 0-2-3.500H2L4 0 2 3.500H-2Z" strokeWidth="1.3" />
      </g>
      <circle r="1.2" fill="#ffd94c" />
    </svg>
  );
}

export default function App() {
  return (
    <div className="min-h-[1785px] bg-[#f5f5f5] font-[Inter,sans-serif]">
      <Header />
      <main className="mx-auto flex h-[1413px] w-[1296px] flex-col pt-6">
        <h1 className="text-[33px] font-medium leading-[48px] tracking-[0.8px] text-black">Contact</h1>
        <div className="mt-[6px] flex h-[21px] items-center text-[14px] text-gray-500">
          <svg viewBox="0 0 16 16" className="h-4 w-4" fill="none" stroke="currentColor" strokeWidth="1.1">
            <path d="M.8 8.700 8 .9 15.200 8.700M2.500 7.500V15H6.300V10.300H9.700V15H13.500V7.500" />
          </svg>
          <svg viewBox="0 0 8 14" className="ml-4 h-[14px] w-2" fill="none" stroke="currentColor" strokeWidth="1.1">
            <path d="M1 .5 6.800 7 1 13.500" />
          </svg>
          <span className="ml-[15px]">CONTACT</span>
        </div>

        <section className="mt-[22px] flex flex-col rounded-[5px] bg-white p-8">
          <h2 className="mb-2 text-center text-[20px] font-medium leading-[30px] tracking-[-0.4px] text-black">
            VISIT OUR PHISICAL STORE
          </h2>
          <MapSection />
        </section>

        <section className="mt-6 flex flex-col rounded-[5px] bg-white p-8">
          <h2 className="mb-2 text-center text-[20px] font-medium leading-[30px] text-black">CONTACT FORM</h2>
          <div className="flex flex-col gap-4">
            <div className="grid grid-cols-2 gap-x-6 gap-y-4">
              <Field label="First Name" placeholder="John" />
              <Field label="Last Name" placeholder="Smith" />
              <Field label="Email" placeholder="john@gmail.com" />
              <Field label="Phone" placeholder="+1 8393 9384 4441" numeric />
            </div>
            <Field label="Subject" placeholder="Subject" />
            <label className="flex flex-col">
              <FieldLabel>Message</FieldLabel>
              <textarea
                placeholder="Write your message"
                className="h-[147px] resize-none rounded-[5px] border border-gray-300 bg-white px-[14px] py-[9px] text-[14.5px] leading-[21px] tracking-[0.25px] placeholder:text-gray-400"
              />
            </label>
          </div>
          <div className="mt-6 flex items-center justify-between">
            <div className="text-[16px] leading-6">
              <p className="font-medium tracking-[0.45px] text-[#0f766e]">Call us:</p>
              <p className="tracking-[-0.1px] text-gray-700">+1 445 552 990</p>
            </div>
            <button className="h-[38px] w-[131px] whitespace-nowrap rounded-[4px] bg-[#0f766e] text-[14px] font-medium tracking-[0.3px] text-white">
              Send Message
            </button>
          </div>
        </section>
      </main>
      <Footer />
      <DevtoolsFlower />
      <div className="fixed bottom-1 right-1 flex h-6 w-6 items-center justify-center rounded-full bg-gray-800 font-['Liberation_Mono',monospace] text-[11px] text-white">
        2xl
      </div>
    </div>
  );
}
